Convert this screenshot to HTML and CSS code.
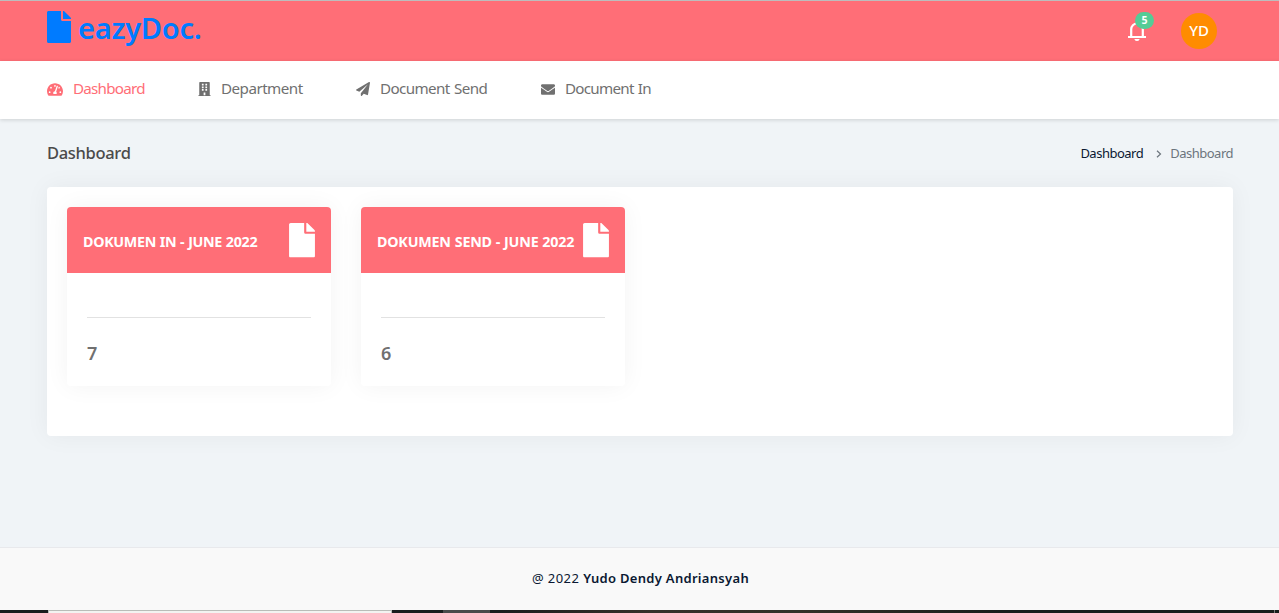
FILE: index.html
```html
<!DOCTYPE html>
<html lang="en">
<head>
<meta charset="utf-8">
<title>eazyDoc.</title>
<link rel="stylesheet" href="styles.css">
</head>
<body>
<svg class="sprite" aria-hidden="true">
  <symbol id="file" viewBox="0 0 384 512"><path d="M224 136V0H24C10.700 0 0 10.700 0 24v464c0 13.300 10.700 24 24 24h336c13.300 0 24-10.700 24-24V160H248c-13.200 0-24-10.800-24-24zm160-14.100v6.100H256V0h6.100c6.400 0 12.500 2.500 17 7l97.900 98c4.500 4.500 7 10.600 7 16.900z"/></symbol>
</svg>
<header class="topbar">
  <a class="brand"><svg class="brand-icon"><use href="#file"/></svg><span class="brand-name">eazyDoc.</span></a>
  <div class="tools">
    <div class="bell">
      <svg class="bell-icon" viewBox="0 0 18 20"><path d="M3.200 16V8.300a5.800 5.800 0 0 1 11.600 0V16" fill="none" stroke="currentColor" stroke-width="2.200"/><path d="M0 14.900h18v2H0zM6.500 18h5v.5q-.8 1.500-2.500 1.500t-2.500-1.500z"/></svg>
      <span class="count">5</span>
    </div>
    <div class="avatar">YD</div>
  </div>
</header>
<nav class="nav">
  <a class="nav-item active"><svg class="nav-icon dash" viewBox="0 32 576 448"><path d="M288 32C128.940 32 0 160.940 0 320c0 52.800 14.250 102.260 39.060 144.800 5.610 9.620 16.300 15.200 27.440 15.200h443c11.140 0 21.830-5.580 27.440-15.200C561.750 422.260 576 372.800 576 320c0-159.060-128.940-288-288-288zm0 64c14.710 0 26.580 10.130 30.320 23.650-1.110 2.260-2.640 4.230-3.450 6.670l-9.220 27.670c-5.130 3.490-10.970 6.010-17.640 6.010-17.670 0-32-14.330-32-32S270.330 96 288 96zM96 384c-17.670 0-32-14.330-32-32s14.330-32 32-32 32 14.330 32 32-14.330 32-32 32zm48-160c-17.670 0-32-14.330-32-32s14.330-32 32-32 32 14.330 32 32-14.330 32-32 32zm246.770-72.410l-61.330 184C343.130 347.330 352 364.540 352 384c0 11.720-3.380 22.550-8.880 32H232.880c-5.500-9.450-8.880-20.280-8.880-32 0-33.940 26.500-61.430 59.900-63.590l61.340-184.010c4.170-12.560 17.730-19.450 30.360-15.170 12.570 4.190 19.350 17.790 15.170 30.360zm14.660 57.200l15.520-46.550c3.470-1.290 7.130-2.230 11.050-2.230 17.670 0 32 14.330 32 32s-14.330 32-32 32c-11.380-.01-20.890-6.280-26.570-15.220zM480 384c-17.670 0-32-14.330-32-32s14.330-32 32-32 32 14.330 32 32-14.330 32-32 32z"/></svg><span class="t-dash">Dashboard</span></a>
  <a class="nav-item"><svg class="nav-icon build" viewBox="0 0 448 512"><path d="M436 480h-20V24c0-13.255-10.745-24-24-24H56C42.745 0 32 10.745 32 24v456H12c-6.627 0-12 5.373-12 12v20h448v-20c0-6.627-5.373-12-12-12zM128 76c0-6.627 5.373-12 12-12h40c6.627 0 12 5.373 12 12v40c0 6.627-5.373 12-12 12h-40c-6.627 0-12-5.373-12-12V76zm0 96c0-6.627 5.373-12 12-12h40c6.627 0 12 5.373 12 12v40c0 6.627-5.373 12-12 12h-40c-6.627 0-12-5.373-12-12v-40zm52 148h-40c-6.627 0-12-5.373-12-12v-40c0-6.627 5.373-12 12-12h40c6.627 0 12 5.373 12 12v40c0 6.627-5.373 12-12 12zm76 160h-64v-84c0-6.627 5.373-12 12-12h40c6.627 0 12 5.373 12 12v84zm64-172c0 6.627-5.373 12-12 12h-40c-6.627 0-12-5.373-12-12v-40c0-6.627 5.373-12 12-12h40c6.627 0 12 5.373 12 12v40zm0-96c0 6.627-5.373 12-12 12h-40c-6.627 0-12-5.373-12-12v-40c0-6.627 5.373-12 12-12h40c6.627 0 12 5.373 12 12v40zm0-96c0 6.627-5.373 12-12 12h-40c-6.627 0-12-5.373-12-12V76c0-6.627 5.373-12 12-12h40c6.627 0 12 5.373 12 12v40z"/></svg><span class="t-dept">Department</span></a>
  <a class="nav-item"><svg class="nav-icon plane" viewBox="0 0 512 512"><path d="M476 3.200L12.500 270.600c-18.100 10.400-15.800 35.600 2.200 43.200L121 358.400l287.300-253.200c5.500-4.900 13.300 2.600 8.600 8.300L176 407v80.500c0 23.600 28.500 32.900 42.500 15.800L282 426l124.600 52.200c14.200 6 30.400-2.900 33-18.200l72-432C515 7.800 493.300-6.800 476 3.200z"/></svg><span class="t-send">Document Send</span></a>
  <a class="nav-item"><svg class="nav-icon mail" viewBox="0 64 512 384"><path d="M502.300 190.800c3.900-3.100 9.700-.2 9.700 4.700V400c0 26.500-21.500 48-48 48H48c-26.500 0-48-21.500-48-48V195.600c0-5 5.700-7.800 9.700-4.700 22.400 17.400 52.100 39.500 154.100 113.600 21.100 15.400 56.700 47.800 92.200 47.600 35.700.3 72-32.800 92.300-47.600 102-74.100 131.600-96.300 154-113.700zM256 320c23.200.4 56.600-29.200 73.400-41.400 132.700-96.300 142.800-104.700 173.400-128.700 5.800-4.500 9.200-11.500 9.200-18.900v-19c0-26.500-21.500-48-48-48H48c-26.500 0-48 21.500-48 48v19c0 7.400 3.400 14.300 9.200 18.900 30.600 23.900 40.700 32.400 173.400 128.700 16.800 12.200 50.200 41.800 73.400 41.400z"/></svg><span class="t-in">Document In</span></a>
</nav>
<main class="content">
  <div class="page-head">
    <h1 class="title">Dashboard</h1>
    <div class="crumbs"><a class="crumb-link">Dashboard</a><svg class="chevron" viewBox="0 0 6 8"><path d="M1 .7 4.500 4 1 7.300" fill="none" stroke="currentColor" stroke-width="1.200"/></svg><span>Dashboard</span></div>
  </div>
  <section class="panel">
    <article class="card">
      <div class="card-head"><h2 class="card-title t-cin">DOKUMEN IN - JUNE 2022</h2><svg class="card-icon"><use href="#file"/></svg></div>
      <div class="card-body"><hr class="rule"><div class="value">7</div></div>
    </article>
    <article class="card">
      <div class="card-head"><h2 class="card-title t-csend">DOKUMEN SEND - JUNE 2022</h2><svg class="card-icon"><use href="#file"/></svg></div>
      <div class="card-body"><hr class="rule"><div class="value">6</div></div>
    </article>
  </section>
</main>
<footer class="footer"><span class="year">@ 2022</span><b class="author">Yudo Dendy Andriansyah</b></footer>
<div class="taskbar"><div class="task-search"></div><div class="task-button"></div><div class="task-edge"></div></div>
</body>
</html>
```
FILE: styles.css
```css
* { box-sizing: border-box; }
body {
  margin: 0;
  height: 613px;
  overflow: hidden;
  display: flex;
  flex-direction: column;
  background: #f0f4f7;
  font-family: "Noto Sans", "Open Sans", sans-serif;
  color: #707070;
  white-space: nowrap;
}
svg { display: block; fill: currentColor; flex: none; }
.sprite { position: absolute; width: 0; height: 0; }
.topbar {
  height: 61px;
  flex: none;
  border-top: 1px solid #bdbdbd;
  background: #ff6e77;
  padding: 0 62px 0 47px;
  display: flex;
  justify-content: space-between;
}
.brand { display: flex; color: #007bff; padding-top: 10px; }
.brand-icon { width: 24px; height: 32px; }
.brand-name { margin: -3px 0 0 7px; font-size: 29px; line-height: 40px; font-weight: 600; letter-spacing: -0.250px; }
.tools { display: flex; padding-top: 12px; gap: 34px; }
.bell { position: relative; width: 20px; color: #fff; }
.bell-icon { width: 18px; height: 20px; margin: 8px 0 0 1px; }
.count {
  position: absolute;
  left: 8px;
  top: -1px;
  width: 19px;
  height: 17px;
  border-radius: 9px;
  background: #54cc96;
  font-size: 10.500px;
  font-weight: 700;
  line-height: 17px;
  text-align: center;
}
.avatar {
  width: 36px;
  height: 36px;
  border-radius: 50%;
  background: #ff8c00;
  color: #fff;
  font-size: 15px;
  font-weight: 500;
  line-height: 35px;
  text-align: center;
}
.nav {
  height: 58px;
  flex: none;
  position: relative;
  background: #fff;
  box-shadow: 0 1px 4px rgba(0, 0, 0, 0.15);
  padding: 0 47px 2px;
  display: flex;
  align-items: center;
  gap: 53px;
}
.nav-item { display: flex; align-items: center; gap: 10px; font-size: 15.200px; line-height: 24px; }
.nav-item span { margin: -3px 0 0; }
.active { color: #ff6e77; }
.dash { width: 16px; height: 13px; }
.build { width: 13px; height: 14px; }
.plane { width: 14px; height: 14px; }
.mail { width: 14px; height: 11px; }
.t-dash { width: 72px; letter-spacing: -0.760px; }
.t-dept { width: 82px; letter-spacing: -0.530px; }
.t-send { width: 108px; letter-spacing: -0.610px; word-spacing: 1px; }
.t-in { width: 87px; letter-spacing: -0.740px; word-spacing: 1px; }
.content { flex: 1; padding: 22px 46px 0 47px; }
.page-head { display: flex; justify-content: space-between; height: 46px; }
.title { margin: 0; font-size: 16.500px; line-height: 24px; font-weight: 500; color: #4b4b4b; letter-spacing: -0.320px; }
.crumbs { display: flex; font-size: 13px; line-height: 25px; letter-spacing: -0.500px; color: #6c757d; }
.crumb-link { color: #0a1832; }
.chevron { width: 6px; height: 8px; margin: 9px 8px 0 13px; }
.panel {
  height: 249px;
  background: #fff;
  border-radius: 4px;
  box-shadow: 0 0 24px rgba(0, 0, 0, 0.050);
  padding: 20px;
  display: flex;
  align-items: flex-start;
  gap: 30px;
}
.card { width: 264px; height: 179px; border-radius: 4px; box-shadow: 0 0 24px rgba(0, 0, 0, 0.050); overflow: hidden; background: #fff; }
.card-head { height: 66px; background: #ff6e77; color: #fff; padding: 16px; display: flex; justify-content: space-between; }
.card-title { margin: 5px 0 0; font-size: 14.300px; line-height: 28px; font-weight: 700; }
.t-cin { letter-spacing: -0.320px; word-spacing: 0.400px; }
.t-csend { letter-spacing: -0.200px; word-spacing: 0.400px; }
.card-icon { width: 26px; height: 34.500px; }
.card-body { padding: 44px 20px 0; }
.rule { margin: 0; border: 0; height: 1px; background: #e2e2e2; }
.value { margin-top: 21px; font-size: 18px; line-height: 28px; font-weight: 600; }
.footer {
  height: 63px;
  flex: none;
  border-top: 1px solid #e8e9ec;
  background: #f9f9f9;
  color: #0a1832;
  font-size: 13px;
  line-height: 61px;
  padding-left: 2px;
  display: flex;
  justify-content: center;
  gap: 4px;
}
.year { letter-spacing: 0.400px; }
.author { font-weight: 600; letter-spacing: 0.300px; }
.taskbar { height: 3px; flex: none; display: flex; padding-left: 48px; background: linear-gradient(90deg, #1a1d1d 0 500px, #35302a 650px, #333128 800px, #1a1d1b 1000px); }
.task-search { width: 344px; background: #f3f3f1; border: 1px solid #b9bcb8; border-bottom: 0; }
.task-button { width: 47px; margin-left: 51px; background: #4a4a4a; }
.task-edge { width: 1px; margin: 0 4px 0 auto; background: #777; }
```
